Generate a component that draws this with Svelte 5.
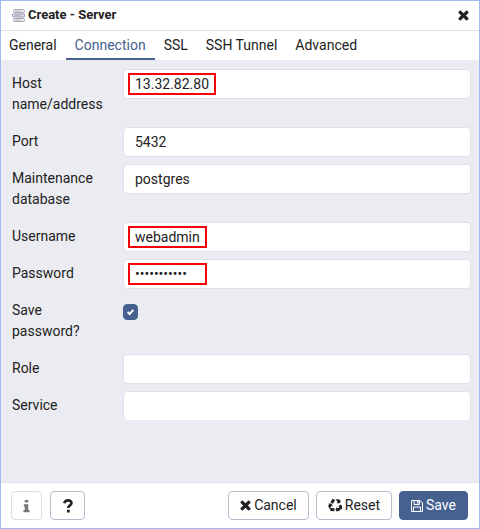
<script lang="ts">
  let activeTab = 'Connection';
  const tabs = ['General', 'Connection', 'SSL', 'SSH Tunnel', 'Advanced'];

  let fields = [
    { id: 'host', label: 'Host name/address', type: 'text', value: '13.32.82.80', mark: 'wide' },
    { id: 'port', label: 'Port', type: 'text', value: '5432' },
    { id: 'db', label: 'Maintenance database', type: 'text', value: 'postgres' },
    { id: 'username', label: 'Username', type: 'text', value: 'webadmin', mark: 'narrow' },
    { id: 'password', label: 'Password', type: 'password', value: 'webadmin123', mark: 'narrow' },
    { id: 'save-password', label: 'Save password?', type: 'checkbox', value: '' },
    { id: 'role', label: 'Role', type: 'text', value: '' },
    { id: 'service', label: 'Service', type: 'text', value: '' }
  ];
  let savePassword = true;

  const timesPath =
    'M1490 1322q0 40-28 68l-136 136q-28 28-68 28t-68-28l-294-294-294 294q-28 28-68 28t-68-28l-136-136q-28-28-28-68t28-68l294-294-294-294q-28-28-28-68t28-68l136-136q28-28 68-28t68 28l294 294 294-294q28-28 68-28t68 28l136 136q28 28 28 68t-28 68l-294 294 294 294q28 28 28 68z';
</script>

<div class="dialog" role="dialog" aria-labelledby="dialog-title">
  <header class="dialog-header">
    <svg class="server-icon" viewBox="0 0 14 14" aria-hidden="true">
      <g fill="#e9e9ec" stroke="#a9a9ae">
        <rect x="1.5" y="0.5" width="11" height="3" rx="1" />
        <rect x="1.5" y="9.5" width="11" height="3" rx="1" />
        <rect x="0.5" y="5" width="12" height="3" rx="1" fill="#dcdcec" stroke="#9696b4" />
      </g>
      <path d="M3 2h5M3 6.5h5M3 11h5" stroke="#b8b8c4" />
    </svg>
    <h1 id="dialog-title">Create - Server</h1>
    <button class="close" type="button" aria-label="Close">
      <svg viewBox="256 320 1280 1280" width="11" height="11" aria-hidden="true">
        <path d={timesPath} fill="currentColor" />
      </svg>
    </button>
  </header>

  <div class="tabs" role="tablist">
    {#each tabs as tab}
      <button
        class="tab"
        class:active={tab === activeTab}
        type="button"
        role="tab"
        aria-selected={tab === activeTab}
        on:click={() => (activeTab = tab)}
      >{tab}</button>
    {/each}
  </div>

  <div class="panel">
    <form class="fields" id="server-form">
      {#each fields as field}
        <div class="row">
          <label for={field.id}>{field.label}</label>
          <div class="control">
            {#if field.type === 'checkbox'}
              <input id={field.id} class="check" type="checkbox" bind:checked={savePassword} />
              <svg class="tick" viewBox="0 0 15 16" aria-hidden="true">
                <path d="M4.7 8l2 2.1 3.6-4.2" fill="none" stroke="#fff" stroke-width="2" />
              </svg>
            {:else}
              <input id={field.id} class="text" type={field.type} value={field.value} autocomplete="off" />
            {/if}
            {#if field.mark}
              <span class="mark {field.mark}"></span>
            {/if}
          </div>
        </div>
      {/each}
    </form>
  </div>

  <footer class="dialog-footer">
    <button class="btn info" type="button" aria-label="SQL help" disabled>
      <svg viewBox="0 0 8 14" width="8" height="14" aria-hidden="true">
        <path d="M2 0h4v3H2zM1 5h5v6.5h1.5V14h-7v-2.5H2v-4H1z" fill="currentColor" />
      </svg>
    </button>
    <button class="btn help" type="button" aria-label="Help">
      <svg viewBox="0 0 10 14" width="10" height="14" aria-hidden="true">
        <path d="M1.3 4.3C1.8 2.2 3 1.4 5 1.4c2.1 0 3.5 1.1 3.5 2.7C8.5 6.4 5.2 6.3 5.2 9" fill="none" stroke="currentColor" stroke-width="2.6" />
        <path d="M3.9 10.7h2.8v2.8H3.9z" fill="currentColor" />
      </svg>
    </button>
    <div class="actions">
      <button class="btn" type="button">
        <svg viewBox="256 320 1280 1280" width="11" height="11" aria-hidden="true">
          <path d={timesPath} fill="currentColor" />
        </svg>
        Cancel
      </button>
      <button class="btn" type="reset" form="server-form">
        <svg viewBox="0 0 1792 1792" width="14" height="14" aria-hidden="true">
          <path d="M836 1169l-15 368-2 22-420-29q-36-3-67-31.500t-47-65.500q-11-27-14.500-55t4-65 12-55 21.500-64 19-53q78 12 509 28zM449 583l180 379-147-92q-63 72-111.500 144.500T298 1139t-39.500 94.500T240 1297l-4 21-190-357q-17-26-18-56t6-47l8-18q35-63 114-188L16 566zM1680 1100l-188 359q-12 29-36.500 46.500T1412 1525l-18 4q-71 7-219 12l8 164-230-367 211-362 7 173q170 16 283 5t170-33zM895 176q-47 63-265 435L313 424l-19-12L519 56q20-31 60-45t80-10q24 2 48.500 12t42 21 41.500 33 36 34.500 36 39.500 32 35zM1655 706l212 363q18 37 12.500 76t-27.500 74q-13 20-33 37t-38 28-48.500 22-47 16-51.500 14-46 12q-34-72-265-436l313-195zM1567 267l142-83-220 373-419-20 151-86q-34-89-75-166t-75.500-123.500-64.500-80-47-46.500l-17-13 405 1q31-3 58 10.500t39 28.500l11 15q39 61 112 190z" fill="currentColor" />
        </svg>
        Reset
      </button>
      <button class="btn primary" type="submit" form="server-form">
        <svg viewBox="0 0 12 12" width="12" height="12" aria-hidden="true">
          <path d="M0.500 0.500h8.500l2.500 2.500v8.500H0.500zM3 0.500v4h5.500v-4M2.500 11.500V7h7v4.500" fill="none" stroke="currentColor" />
          <path d="M6 1h1.500v2.500H6z" fill="currentColor" />
        </svg>
        Save
      </button>
    </div>
  </footer>
</div>

<style>
  :global(body) {
    background: #fff;
  }

  .dialog {
    display: flex;
    flex-direction: column;
    box-sizing: border-box;
    min-height: 100vh;
    border: 1px solid #9dbdf2;
    font-family: Roboto, "Liberation Sans", sans-serif;
    font-size: 14px;
    line-height: 21px;
    color: #222;
    background: #fff;
  }

  button,
  input {
    font: inherit;
    color: inherit;
  }

  .dialog-header {
    display: flex;
    align-items: center;
    height: 29px;
    padding: 0 10px 0 11px;
    border-bottom: 1px solid #dde0e6;
  }

  .server-icon {
    width: 14px;
    height: 14px;
    margin-right: 2px;
  }

  h1 {
    flex: 1;
    margin: 0;
    padding-bottom: 2px;
    font-size: 13px;
    font-weight: 700;
  }

  .close {
    display: flex;
    padding: 0;
    border: 0;
    background: none;
  }

  .tabs {
    display: flex;
    height: 29px;
  }

  .tab {
    padding: 2px 9px 0;
    border: 0;
    border-bottom: 2px solid transparent;
    background: none;
  }

  .tab:first-child {
    padding-left: 8px;
  }

  .tab.active {
    border-color: #466190;
    color: #466190;
  }

  .panel {
    flex: 1;
    padding: 9px 8px 9px 11px;
    background: #ebecf1;
  }

  .fields {
    display: flex;
    flex-direction: column;
    gap: 8px;
    overflow: hidden;
  }

  .row {
    display: flex;
    align-items: flex-start;
  }

  label {
    flex: 0 0 95px;
    padding: 4px 16px 4px 0;
  }

  .control {
    position: relative;
    flex: 1;
  }

  .text {
    display: block;
    box-sizing: border-box;
    width: 100%;
    height: 30px;
    margin-bottom: -1px;
    padding: 0 11px;
    border: 1px solid #dde0e6;
    border-radius: 4px;
    background: #fff;
  }

  .check {
    display: block;
    appearance: none;
    width: 15px;
    height: 16px;
    margin: 8px 0 0;
    border: 1px solid #466190;
    border-radius: 4px;
    background: #fff;
  }

  .check:checked {
    background: #466190;
  }

  .tick {
    position: absolute;
    top: 8px;
    left: 0;
    width: 15px;
    height: 16px;
    pointer-events: none;
  }

  .mark {
    position: absolute;
    top: 4px;
    left: 5px;
    box-sizing: border-box;
    width: 79px;
    height: 22px;
    border: 2px solid #f70008;
    pointer-events: none;
  }

  .mark.wide {
    width: 88px;
  }

  .dialog-footer {
    display: flex;
    gap: 8px;
    padding: 8px 11px 8px 10px;
    border-top: 1px solid #dde0e6;
  }

  .actions {
    display: flex;
    gap: 7px;
    margin-left: auto;
  }

  .btn {
    display: flex;
    align-items: center;
    justify-content: center;
    gap: 3px;
    height: 29px;
    padding: 0 11px;
    border: 1px solid #babccd;
    border-radius: 4px;
    background: #fff;
  }

  .btn.info {
    width: 31px;
    border-color: #dcdde6;
    color: #777;
  }

  .btn.help {
    width: 35px;
  }

  .btn.primary {
    border-color: #466190;
    color: #fff;
    background: #466190;
  }
</style>
